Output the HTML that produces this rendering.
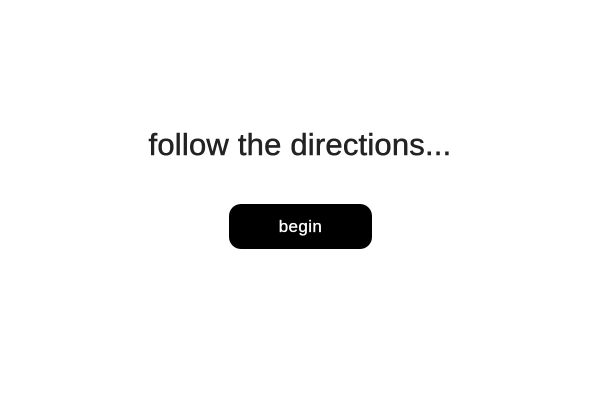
<!DOCTYPE html>
<html><head><style>
html,body{margin:0;padding:0;width:600px;height:400px;background:#fff;overflow:hidden;font-family:"Liberation Sans",sans-serif}
h1{position:absolute;left:0;width:600px;top:126px;margin:0;text-align:center;font-weight:normal;font-size:31px;line-height:38px;color:#222;letter-spacing:0.2px;-webkit-text-stroke:0.5px #222}
.btn{position:absolute;left:229px;top:204px;width:143px;height:45px;background:#000;border-radius:12px;color:#fff;font-size:17px;line-height:45px;text-align:center;letter-spacing:0.4px;-webkit-text-stroke:0.3px #fff}
</style></head><body>
<h1>follow the directions...</h1>
<div class="btn">begin</div>
</body></html>
